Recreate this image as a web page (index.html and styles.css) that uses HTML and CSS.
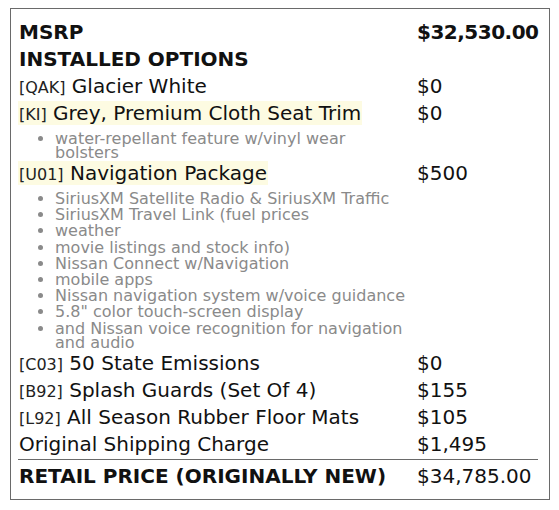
FILE: index.html
```html
<!DOCTYPE html>
<html lang="en">
<head>
<meta charset="utf-8">
<title>Window Sticker</title>
<link rel="stylesheet" href="styles.css">
</head>
<body>
<div class="sheet">
  <table class="price-table">
    <colgroup><col class="col-desc"><col class="col-price"></colgroup>
    <tr class="bold-row">
      <td>MSRP</td>
      <td class="msrp-price">$32,530.00</td>
    </tr>
    <tr class="bold-row">
      <td colspan="2">INSTALLED OPTIONS</td>
    </tr>
    <tr>
      <td><span class="code">[QAK]</span> Glacier White</td>
      <td>$0</td>
    </tr>
    <tr>
      <td><span class="hl"><span class="code">[KI]</span> Grey, Premium Cloth Seat Trim</span>
        <ul class="features">
          <li>water-repellant feature w/vinyl wear bolsters</li>
        </ul>
      </td>
      <td>$0</td>
    </tr>
    <tr>
      <td><span class="hl"><span class="code">[U01]</span> Navigation Package</span>
        <ul class="features">
          <li>SiriusXM Satellite Radio &amp; SiriusXM Traffic</li>
          <li>SiriusXM Travel Link (fuel prices</li>
          <li>weather</li>
          <li>movie listings and stock info)</li>
          <li>Nissan Connect w/Navigation</li>
          <li>mobile apps</li>
          <li>Nissan navigation system w/voice guidance</li>
          <li>5.8" color touch-screen display</li>
          <li>and Nissan voice recognition for navigation and audio</li>
        </ul>
      </td>
      <td>$500</td>
    </tr>
    <tr>
      <td><span class="code">[C03]</span> 50 State Emissions</td>
      <td>$0</td>
    </tr>
    <tr>
      <td><span class="code">[B92]</span> Splash Guards (Set Of 4)</td>
      <td>$155</td>
    </tr>
    <tr>
      <td><span class="code">[L92]</span> All Season Rubber Floor Mats</td>
      <td>$105</td>
    </tr>
    <tr class="before-total">
      <td>Original Shipping Charge</td>
      <td>$1,495</td>
    </tr>
    <tr class="total-row">
      <td>RETAIL PRICE (ORIGINALLY NEW)</td>
      <td>$34,785.00</td>
    </tr>
  </table>
</div>
</body>
</html>
```

FILE: styles.css
```css
html, body {
  background: #ffffff;
}
body {
  margin: 8px 9px 10px 10px;
  font-family: "DejaVu Sans", "Liberation Sans", sans-serif;
  color: #111111;
}
.sheet {
  width: 540px;
  box-sizing: border-box;
  border: 1px solid #6a6a6a;
  padding: 9px 11px 9px 7px;
}
.price-table {
  width: 520px;
  border-collapse: collapse;
  table-layout: fixed;
}
.col-desc {
  width: 398px;
}
.price-table td {
  font-size: 20px;
  line-height: 20px;
  padding: 4px 0 3px 1px;
  vertical-align: top;
}
.bold-row td {
  font-weight: bold;
}
.msrp-price {
  letter-spacing: -0.5px;
}
.code {
  font-size: 16px;
  line-height: 16px;
  color: #222222;
}
.hl {
  background: #fdfbe2;
  padding: 0 1px;
  margin-left: -1px;
}
.features {
  margin: 9px 6px -4px 0;
  padding-left: 36px;
  list-style: disc;
  color: #8a8a8a;
}
.features li {
  font-size: 16px;
  line-height: 14px;
  margin-bottom: 2.2px;
}
.features li:last-child {
  margin-bottom: 0;
}
.before-total td {
  padding-bottom: 5px;
}
.total-row td {
  border-top: 1px solid #6a6a6a;
  padding-top: 6px;
  padding-bottom: 4px;
}
.total-row td:first-child {
  font-weight: bold;
}
```
